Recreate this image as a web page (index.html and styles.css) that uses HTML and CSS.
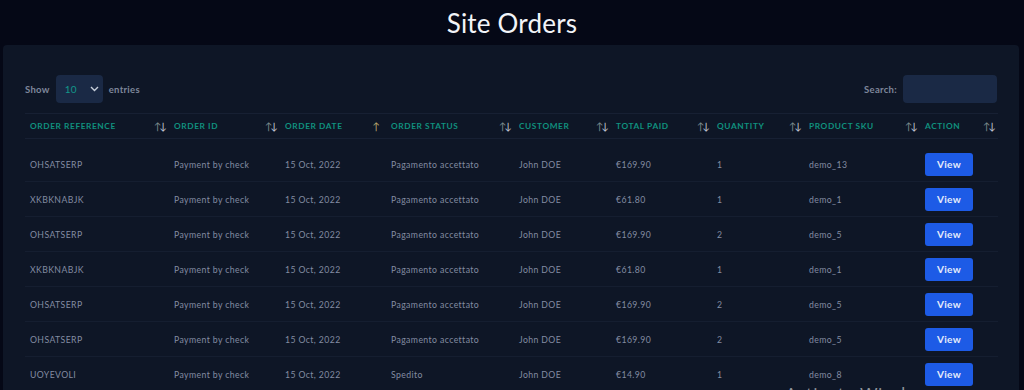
FILE: index.html
```html
<!DOCTYPE html>
<html>
<head>
  <title>Site Orders</title>
  <link rel="stylesheet" href="styles.css">
</head>
<body>
  <h1 class="page-title">Site Orders</h1>

  <div class="orders-card">
    <div class="table-controls">
      <label class="length-control">Show
        <span class="select-box">10 <svg width="9" height="6" viewBox="0 0 9 6"><path d="M1 1l3.5 3.5L8 1" fill="none" stroke="#c7cfdb" stroke-width="1.4"/></svg></span>
        entries</label>
      <label class="search-control">Search: <span class="search-box"></span></label>
    </div>

    <table class="orders-table">
      <thead>
        <tr>
          <th class="c1">Order Reference<span class="sort"><i class="up">↑</i><i>↓</i></span></th>
          <th class="c2">Order ID<span class="sort"><i class="up">↑</i><i>↓</i></span></th>
          <th class="c3">Order Date<span class="sort"><i class="asc">↑</i></span></th>
          <th class="c4">Order Status<span class="sort"><i class="up">↑</i><i>↓</i></span></th>
          <th class="c5">Customer<span class="sort"><i class="up">↑</i><i>↓</i></span></th>
          <th class="c6">Total Paid<span class="sort"><i class="up">↑</i><i>↓</i></span></th>
          <th class="c7">Quantity<span class="sort"><i class="up">↑</i><i>↓</i></span></th>
          <th class="c8">Product SKU<span class="sort"><i class="up">↑</i><i>↓</i></span></th>
          <th class="c9">Action<span class="sort"><i class="up">↑</i><i>↓</i></span></th>
        </tr>
      </thead>
      <tbody>
        <tr class="first">
          <td>OHSATSERP</td><td>Payment by check</td><td>15 Oct, 2022</td><td>Pagamento accettato</td><td>John DOE</td><td>€169.90</td><td>1</td><td>demo_13</td><td><button class="view-button">View</button></td>
        </tr>
        <tr>
          <td>XKBKNABJK</td><td>Payment by check</td><td>15 Oct, 2022</td><td>Pagamento accettato</td><td>John DOE</td><td>€61.80</td><td>1</td><td>demo_1</td><td><button class="view-button">View</button></td>
        </tr>
        <tr>
          <td>OHSATSERP</td><td>Payment by check</td><td>15 Oct, 2022</td><td>Pagamento accettato</td><td>John DOE</td><td>€169.90</td><td>2</td><td>demo_5</td><td><button class="view-button">View</button></td>
        </tr>
        <tr>
          <td>XKBKNABJK</td><td>Payment by check</td><td>15 Oct, 2022</td><td>Pagamento accettato</td><td>John DOE</td><td>€61.80</td><td>1</td><td>demo_1</td><td><button class="view-button">View</button></td>
        </tr>
        <tr>
          <td>OHSATSERP</td><td>Payment by check</td><td>15 Oct, 2022</td><td>Pagamento accettato</td><td>John DOE</td><td>€169.90</td><td>2</td><td>demo_5</td><td><button class="view-button">View</button></td>
        </tr>
        <tr>
          <td>OHSATSERP</td><td>Payment by check</td><td>15 Oct, 2022</td><td>Pagamento accettato</td><td>John DOE</td><td>€169.90</td><td>2</td><td>demo_5</td><td><button class="view-button">View</button></td>
        </tr>
        <tr>
          <td>UOYEVOLI</td><td>Payment by check</td><td>15 Oct, 2022</td><td>Spedito</td><td>John DOE</td><td>€14.90</td><td>1</td><td>demo_8</td><td><button class="view-button">View</button></td>
        </tr>
      </tbody>
    </table>
  </div>

  <div class="watermark">Activate Windows</div>
</body>
</html>
```

FILE: styles.css
```css
body {
  margin: 0;
  padding: 0;
  background: #050816;
  font-family: Lato, "Open Sans", sans-serif;
  color: #8a93a8;
  height: 390px;
  overflow: hidden;
  position: relative;
}

.page-title {
  margin: 0;
  height: 45px;
  line-height: 46px;
  text-align: center;
  font-size: 26px;
  font-weight: 400;
  color: #f2f4f8;
  letter-spacing: 0.2px;
}

.orders-card {
  margin: 0 5px 0 3px;
  background: #0e1626;
  border-radius: 4px;
  padding: 30px 21px 40px 22px;
}

.table-controls {
  display: flex;
  justify-content: space-between;
  align-items: center;
  height: 28px;
  margin-bottom: 10px;
  font-size: 9.5px;
  font-weight: 700;
  color: #7e879b;
  letter-spacing: 0.3px;
}

.length-control,
.search-control {
  display: flex;
  align-items: center;
  gap: 6px;
}

.select-box {
  display: flex;
  align-items: center;
  justify-content: space-between;
  box-sizing: border-box;
  width: 47px;
  height: 28px;
  padding: 0 4px 0 9px;
  border-radius: 4px;
  background: #1a2945;
  color: #12978a;
  font-weight: 400;
  font-size: 10px;
}

.search-box {
  display: block;
  width: 94px;
  height: 28px;
  border-radius: 4px;
  background: #1a2945;
  margin-right: 1px;
}

.orders-table {
  width: 973px;
  border-collapse: collapse;
  table-layout: fixed;
}

.orders-table th {
  position: relative;
  height: 24px;
  padding: 0 5px;
  text-align: left;
  font-size: 8.3px;
  font-weight: 700;
  text-transform: uppercase;
  letter-spacing: 0.6px;
  color: #10917f;
  border-top: 1px solid #172033;
  border-bottom: 1px solid #172033;
}

.orders-table th.c1 { width: 134px; }
.orders-table th.c2 { width: 101px; }
.orders-table th.c3 { width: 96px; }
.orders-table th.c4 { width: 118px; }
.orders-table th.c5 { width: 87px; }
.orders-table th.c6 { width: 91px; }
.orders-table th.c7 { width: 82px; }
.orders-table th.c8 { width: 106px; }
.orders-table th.c9 { width: 68px; }

.sort {
  position: absolute;
  right: 4px;
  top: 6px;
  font-size: 10px;
  font-weight: 400;
  letter-spacing: -2px;
  color: #c3cad6;
}

.sort i {
  font-style: normal;
}

.sort .up {
  color: #7c8a8c;
}

.sort .asc {
  color: #b7a66d;
  margin-right: 4px;
}

.orders-table td {
  height: 34px;
  padding: 0 5px;
  font-size: 8.7px;
  letter-spacing: 0.4px;
  color: #838ca2;
  border-bottom: 1px solid #151e30;
  white-space: nowrap;
}

.orders-table tr.first td {
  height: 34px;
  padding-top: 8px;
}

.view-button {
  width: 48px;
  height: 23px;
  border: none;
  border-radius: 3px;
  background: #1d5be6;
  color: #e6ecfa;
  font-family: Lato, "Open Sans", sans-serif;
  font-size: 10px;
  font-weight: 700;
  letter-spacing: 0.3px;
  cursor: pointer;
}

.watermark {
  position: absolute;
  left: 785px;
  top: 381px;
  font-size: 19px;
  color: #8f949b;
  font-family: "Open Sans", sans-serif;
}
```
